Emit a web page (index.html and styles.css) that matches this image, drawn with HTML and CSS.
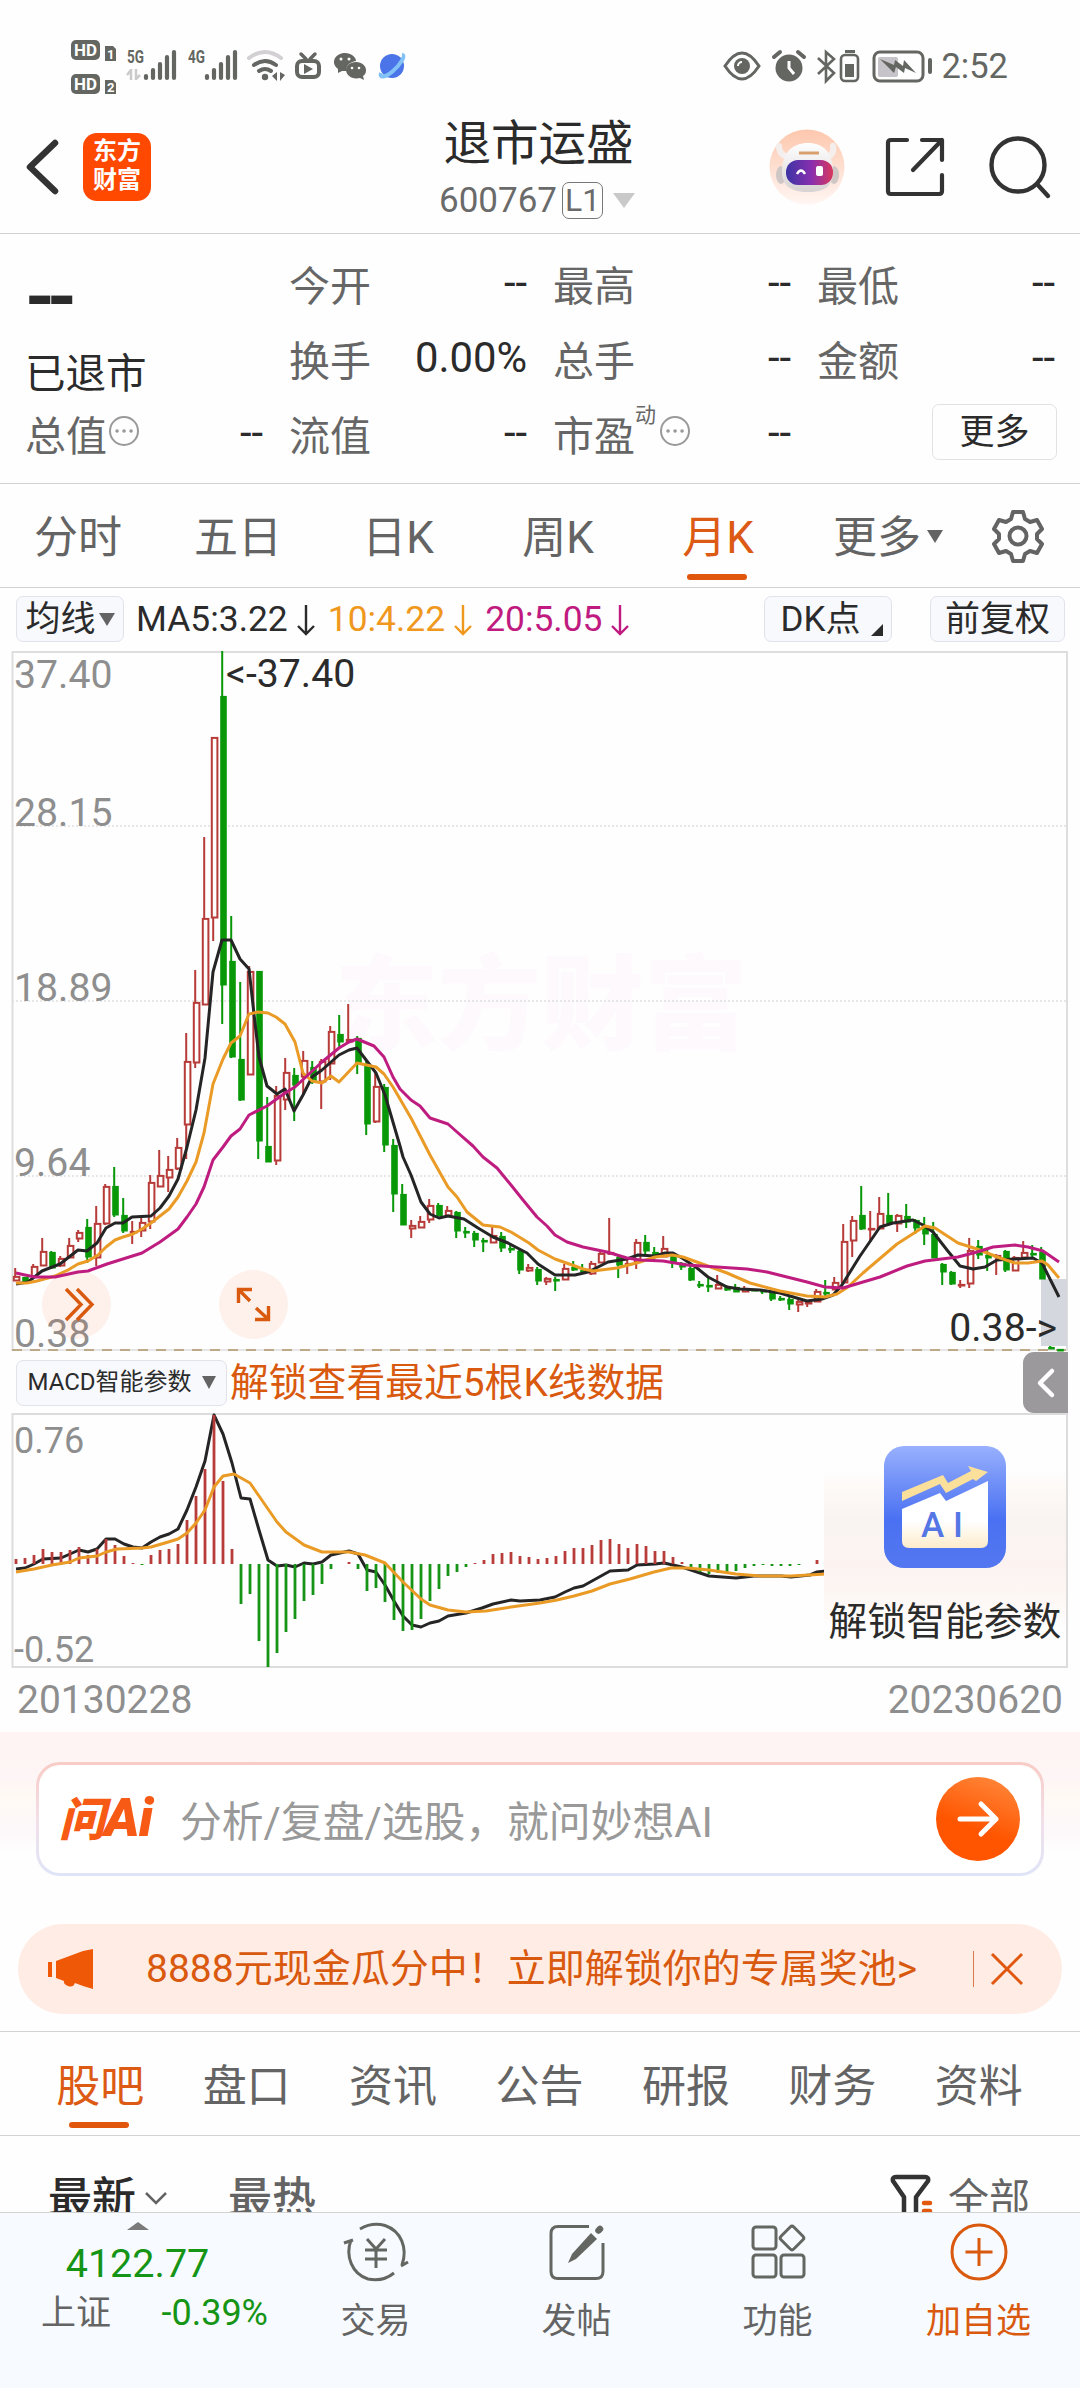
FILE: index.html
```html
<!DOCTYPE html>
<html lang="zh-CN">
  <head>
    <meta charset="UTF-8" />
    <meta name="viewport" content="width=device-width, initial-scale=1.0" />
    <title>退市运盛 600767</title>
    <link rel="stylesheet" href="styles.css">
  </head>

  <body>
    <div class="status">
      <svg class="status-left" viewBox="70 36 340 60" width="340" height="60" fill="#646662">
        <rect x="71" y="40" width="29" height="20" rx="5" />
        <rect x="71" y="74" width="29" height="20" rx="5" />
        <path d="M105 46h8l3 3v12h-11zM105 80h8l3 3v11h-11z" />
        <g fill="#fff" font-weight="700">
          <text x="74" y="56" font-size="17" textLength="23" lengthAdjust="spacingAndGlyphs">HD</text>
          <text x="74" y="90" font-size="17" textLength="23" lengthAdjust="spacingAndGlyphs">HD</text>
          <text x="107" y="59" font-size="13">1</text>
          <text x="107" y="92" font-size="13">2</text>
        </g>
        <g font-weight="700" font-size="19">
          <text x="127" y="63" textLength="17" lengthAdjust="spacingAndGlyphs">5G</text>
          <text x="188" y="63" textLength="17" lengthAdjust="spacingAndGlyphs">4G</text>
        </g>
        <path d="M131 69v11M136 69v11M131 70l-4 5M136 79l4-4" stroke="#cbcbcb" stroke-width="2.5" fill="none" />
        <path d="M146 76v2M153 70v8M160 64v14M167 57v21M174 52v26M207 76v2M214 70v8M221 64v14M228 57v21M235 52v26" stroke="#646662" stroke-width="4.2" stroke-linecap="round" />
        <path d="M249 58q16-12 32 0" fill="none" stroke="#d2d0d2" stroke-width="4" stroke-linecap="round" />
        <path d="M254 65q11-8 22 0M259 71q6-4 12 0" fill="none" stroke="#646662" stroke-width="4" stroke-linecap="round" />
        <circle cx="265" cy="77" r="3.2" />
        <path d="M277 72v9l-5-5zM280 72v9l5-6z" />
        <rect x="297" y="61" width="22" height="16" rx="5" fill="none" stroke="#646662" stroke-width="4" />
        <path d="M301 54l5 5M315 54l-5 5" stroke="#646662" stroke-width="3.5" stroke-linecap="round" />
        <path d="M304 64l9 5-9 5z" />
        <path d="M345 53c6 0 11 4 11 8-7 1-11 6-9 10l-5 0-4 2 0-4c-8-6-3-16 7-16z" />
        <path d="M356 62c6 0 10 4 10 8 0 3-1 5-3 6l1 4-4-2c-8 2-14-3-14-8 0-4 4-8 10-8z" />
        <g fill="#fff"><circle cx="341" cy="59" r="1.5" /><circle cx="349" cy="59" r="1.5" /><circle cx="352" cy="68" r="1.3" /><circle cx="359" cy="68" r="1.3" /></g>
        <circle cx="392" cy="66" r="12" fill="#4a74e8" />
        <path d="M381 73c-2 5 4 5 12-2s13-16 9-16" fill="none" stroke="#83c2f7" stroke-width="4" />
      </svg>
      <div class="status-right">
        <svg viewBox="725 48 212 34" width="212" height="34" fill="#646662">
          <path d="M727 65q17-26 34 0-17 26-34 0z" fill="none" stroke="#646662" stroke-width="3" />
          <circle cx="744" cy="65" r="8" />
          <path d="M740 65a4 4 0 0 1 4-4" stroke="#fff" stroke-width="2" fill="none" />
          <circle cx="791" cy="67" r="13.5" />
          <path d="M791 60v7l5 6" fill="none" stroke="#fff" stroke-width="3" />
          <path d="M776 56l6-5M806 56l-6-5" stroke="#646662" stroke-width="4" stroke-linecap="round" />
          <path d="M820 57l16 15-8 8V51l8 7-16 15" fill="none" stroke="#646662" stroke-width="2.6" />
          <rect x="843" y="54" width="17" height="26" rx="4" fill="none" stroke="#646662" stroke-width="2.6" />
          <path d="M847 49h10v3h-10zM847 63h9v13h-9z" />
          <rect x="876" y="51" width="49" height="29" rx="6" fill="none" stroke="#646662" stroke-width="3" />
          <rect x="880" y="56" width="20" height="20" rx="2" fill="#c6c4c8" />
          <path d="M882 58l14 6 1-5 8 6 1-6 12 13-11-5-1 5-8-6-2 6z" />
          <rect x="930" y="57" width="4" height="16" rx="2" />
        </svg>
        <span class="time">2:52</span>
      </div>
    </div>

    <header>
      <div class="header-left">
        <svg viewBox="0 0 34 60" width="34" height="60"><path d="M29 6L4 30l25 24" fill="none" stroke="#333" stroke-width="6.5" stroke-linecap="round" stroke-linejoin="round" /></svg>
        <div class="logo">东方<br>财富</div>
      </div>
      <div class="title">
        <h1>退市运盛</h1>
        <p>600767<span class="level">L1</span><i class="caret"></i></p>
      </div>
      <div class="header-right">
        <svg viewBox="0 0 76 76" width="76" height="76">
          <defs>
            <linearGradient id="halo" x2="0" y2="1"><stop stop-color="#fdc7ad" /><stop offset="1" stop-color="#fff6f3" /></linearGradient>
            <linearGradient id="visor"><stop stop-color="#3c34a5" /><stop offset=".55" stop-color="#8a2fae" /><stop offset="1" stop-color="#d9365c" /></linearGradient>
            <linearGradient id="head" x2="0" y2="1"><stop stop-color="#fff" /><stop offset="1" stop-color="#d8d2d2" /></linearGradient>
          </defs>
          <circle cx="38" cy="38" r="37.5" fill="url(#halo)" />
          <path d="M10 17q0 9 9 11M64 17q2 8-6 11" stroke="#f4eeec" stroke-width="6" fill="none" stroke-linecap="round" />
          <ellipse cx="12" cy="46" rx="5" ry="9" fill="#cfc6c6" /><ellipse cx="65" cy="46" rx="5" ry="9" fill="#cfc6c6" />
          <path d="M13 43c0-20 11-29 26-29s25 9 25 29c0 13-7 20-25 20s-26-7-26-20z" fill="url(#head)" />
          <path d="M30 24h20" stroke="#d9a06e" stroke-width="3" />
          <rect x="17" y="31" width="47" height="25" rx="12" fill="url(#visor)" />
          <path d="M28 45q4-7 8 0" stroke="#fff" stroke-width="2.5" fill="none" /><rect x="47" y="37" width="7" height="10" rx="2" fill="#fff" />
        </svg>
        <svg viewBox="0 0 60 60" width="60" height="60" fill="none" stroke="#333" stroke-width="4.2" stroke-linecap="round" stroke-linejoin="round"><path d="M22 3H6q-3 0-3 3v48q0 3 3 3h48q3 0 3-3V38M37 3h20v20M57 3L28 33" /></svg>
        <svg viewBox="0 0 62 62" width="62" height="62" fill="none" stroke="#333" stroke-width="4.4" stroke-linecap="round"><circle cx="29" cy="29" r="26.5" /><path d="M48 48l11 12" /></svg>
      </div>
    </header>

    <section class="quote">
      <div class="price">
        <div class="big">--</div>
        <div class="state">已退市</div>
      </div>
      <div class="cell"><span>今开</span><b>--</b></div>
      <div class="cell"><span>最高</span><b>--</b></div>
      <div class="cell"><span>最低</span><b>--</b></div>
      <div class="cell"><span>换手</span><b>0.00%</b></div>
      <div class="cell"><span>总手</span><b>--</b></div>
      <div class="cell"><span>金额</span><b>--</b></div>
      <div class="cell"><span>总值<svg class="dots" viewBox="0 0 32 32"><circle cx="16" cy="16" r="14" /><path d="M9 16h.1M16 16h.1M23 16h.1" /></svg></span><b>--</b></div>
      <div class="cell"><span>流值</span><b>--</b></div>
      <div class="cell"><span>市盈<sup>动</sup><svg class="dots" viewBox="0 0 32 32"><circle cx="16" cy="16" r="14" /><path d="M9 16h.1M16 16h.1M23 16h.1" /></svg></span><b>--</b></div>
      <div class="cell end"><button class="more">更多</button></div>
    </section>

    <nav class="periods">
      <a>分时</a>
      <a>五日</a>
      <a>日K</a>
      <a>周K</a>
      <a class="active">月K</a>
      <a class="wide">更多<i class="caret"></i></a>
      <svg viewBox="0 0 54 54" width="54" height="54" fill="none" stroke="#646464" stroke-width="4" stroke-linejoin="round"><path d="M22 3h10l2 7 5 3 7-2 5 9-5 5v5l5 5-5 9-7-2-5 3-2 7H22l-2-7-5-3-7 2-5-9 5-5v-5l-5-5 5-9 7 2 5-3z" /><circle cx="27" cy="27" r="8.5" /></svg>
    </nav>

    <div class="toolbar">
      <button class="chip ma-chip">均线<i class="caret"></i></button>
      <span class="ma">MA5:3.22<svg viewBox="0 0 18 34"><path d="M9 2v29M1 23l8 8 8-8" /></svg></span>
      <span class="ma ma10">10:4.22<svg viewBox="0 0 18 34"><path d="M9 2v29M1 23l8 8 8-8" /></svg></span>
      <span class="ma ma20">20:5.05<svg viewBox="0 0 18 34"><path d="M9 2v29M1 23l8 8 8-8" /></svg></span>
      <button class="chip dk">DK点<svg viewBox="0 0 12 12" width="12" height="12"><path d="M12 0v12H0z" fill="#2b2b2b" /></svg></button>
      <button class="chip fq">前复权</button>
    </div>

    <svg class="kline" viewBox="12 651 1056 701" width="1056" height="701">
      <text class="watermark" x="335" y="1042">东方财富</text>
      <path d="M12.5 1351V652H1067V1351" fill="none" stroke="#dedede" stroke-width="2" />
      <path d="M12 826h1055M12 1001h1055M12 1176h1055" stroke="#e0e0e0" stroke-width="1.5" stroke-dasharray="2 2" />
      <path d="M12 1350h1055" stroke="#e6e6e6" stroke-width="2" />
      <path d="M12 1350h1055" stroke="#b09468" stroke-width="1.400" stroke-dasharray="10 8" />
      <rect x="1041" y="1279" width="26" height="67" fill="#d5d7df" />
      <g class="axis">
        <text x="14" y="688">37.40</text>
        <text x="14" y="826">28.15</text>
        <text x="14" y="1001">18.89</text>
        <text x="14" y="1176">9.64</text>
        <text x="14" y="1347">0.38</text>
      </g>
      <g class="round">
        <circle cx="76.5" cy="1304.5" r="34.5" /><circle cx="253.5" cy="1304.5" r="34.5" />
        <path d="M66 1289l15 15.500-15 15.500M77 1289l15 15.500-15 15.500" />
        <path d="M238.500 1303v-13.500h13.500M239 1290l11 11M268.500 1306v13.500h-13.500M268 1319l-12-11" />
      </g>
      <g id="candles"></g>
      <g class="lines">
        <polyline class="c5" points="16,1284 28,1282 42,1271 60,1264 78,1250 87,1251 97,1243 106,1228 115,1223 123,1223 132,1217 151,1216 160,1208 169,1196 178,1179 187,1147 196,1110 205,1058 213,972 222,940 231,940 240,959 249,969 255,1023 259,1057 267,1086 277,1094 285,1089 294,1111 303,1095 312,1077 322,1070 339,1055 349,1050 357,1048 376,1073 385,1095 400,1146 403,1157 411,1175 421,1202 430,1214 439,1218 448,1216 464,1219 478,1228 493,1237 508,1243 527,1253 538,1264 555,1275 575,1275 588,1272 608,1262 627,1259 638,1255 655,1256 665,1253 673,1253 682,1258 697,1268 708,1277 727,1287 740,1289 760,1290 780,1293 800,1299 807,1301 822,1299 833,1295 842,1285 860,1256 880,1227 893,1223 913,1220 923,1225 933,1232 947,1250 960,1266 973,1269 985,1267 997,1260 1015,1259 1033,1258 1042,1263 1059,1297" />
        <polyline class="c10" points="16,1283 27,1283 37,1281 55,1276 68,1270 78,1264 88,1261 98,1255 106,1247 115,1240 123,1237 133,1234 142,1229 151,1223 169,1209 178,1197 187,1181 196,1162 204,1133 213,1084 223,1059 231,1043 240,1036 249,1014 258,1012 268,1013 276,1017 285,1024 295,1042 303,1073 312,1081 322,1083 331,1076 339,1082 357,1063 376,1067 384,1074 393,1087 400,1099 411,1118 430,1155 448,1187 457,1197 467,1212 483,1225 500,1227 511,1232 529,1243 538,1250 555,1259 575,1266 583,1269 593,1271 617,1268 640,1262 655,1257 672,1255 683,1257 705,1265 727,1273 750,1283 780,1291 807,1296 825,1297 837,1294 848,1287 863,1273 897,1244 925,1226 935,1228 958,1243 977,1249 1000,1258 1015,1263 1028,1263 1042,1261 1048,1265 1059,1278" />
        <polyline class="c20" points="16,1273 25,1275 35,1277 55,1277 78,1272 88,1271 107,1264 142,1253 160,1242 178,1229 187,1217 196,1204 204,1187 213,1160 223,1147 231,1136 240,1129 249,1115 267,1106 285,1093 295,1087 322,1062 339,1048 349,1042 357,1039 374,1046 384,1057 393,1077 400,1089 411,1100 420,1106 430,1118 448,1124 457,1132 473,1146 483,1157 497,1168 511,1185 523,1200 537,1217 547,1226 555,1235 567,1242 583,1247 607,1252 627,1258 640,1260 663,1261 687,1265 717,1267 747,1269 767,1272 783,1276 807,1282 825,1287 843,1288 863,1282 880,1277 907,1266 925,1261 958,1257 977,1252 993,1247 1015,1245 1028,1247 1043,1251 1059,1262" />
      </g>
      <g class="mark">
        <text x="226" y="687">&lt;-37.40</text>
        <text x="1057" y="1341" text-anchor="end">0.38-&gt;</text>
      </g>
    </svg>

    <div class="macd-bar">
      <button class="chip macd-chip">MACD智能参数<i class="caret"></i></button>
      <span class="unlock">解锁查看最近5根K线数据</span>
      <button class="collapse"><svg viewBox="0 0 20 32" width="20" height="32"><path d="M16 4L4 16l12 12" fill="none" stroke="#fff" stroke-width="4.500" stroke-linecap="round" stroke-linejoin="round" /></svg></button>
    </div>

    <section class="macd">
      <svg viewBox="12 1413 1056 255" width="1056" height="255">
        <rect x="12.5" y="1414" width="1054.500" height="253" fill="none" stroke="#dcdcdc" stroke-width="2" />
        <g class="axis small">
          <text x="14" y="1453">0.76</text>
          <text x="14" y="1662">-0.52</text>
        </g>
        <g class="lines">
          <polyline class="c5" points="16,1569 25,1568 34,1564 43,1559 61,1558 70,1554 79,1550 88,1552 97,1549 106,1539 115,1539 124,1544 133,1547 142,1548 151,1542 160,1537 169,1534 178,1529 187,1510 196,1487 205,1461 214,1415 223,1434 232,1463 241,1498 250,1499 259,1530 268,1560 277,1566 286,1565 295,1567 304,1563 313,1564 322,1562 331,1555 349,1551 358,1554 367,1570 376,1572 385,1585 394,1601 403,1616 412,1625 421,1627 430,1623 439,1621 448,1616 466,1613 482,1608 493,1604 511,1600 520,1601 540,1600 555,1597 565,1592 574,1588 583,1586 610,1571 628,1570 637,1565 655,1564 664,1563 682,1567 709,1576 736,1578 754,1576 781,1576 791,1577 810,1575 817,1572 826,1571" />
        </g>
        <g id="bars"></g>
        <g class="lines">
          <polyline class="c10" points="16,1572 34,1569 52,1565 70,1562 79,1558 97,1556 106,1552 117,1549 142,1548 151,1547 165,1543 178,1539 187,1533 196,1523 205,1510 214,1487 223,1476 234,1474 250,1483 259,1496 268,1509 277,1522 286,1532 304,1545 322,1552 349,1552 365,1555 385,1563 403,1582 421,1599 430,1605 448,1610 466,1612 486,1611 511,1607 540,1603 557,1600 574,1596 592,1591 610,1584 630,1579 654,1572 671,1568 688,1568 709,1570 736,1574 760,1576 791,1576 826,1574" />
        </g>
      </svg>
      <div class="ai-card">
        <svg viewBox="0 0 122 122" width="122" height="122">
          <defs>
            <linearGradient id="blue" x2="0" y2="1"><stop stop-color="#98b0fd" /><stop offset=".6" stop-color="#4a71f2" /><stop offset="1" stop-color="#5477f0" /></linearGradient>
            <linearGradient id="panel" x2="0" y2="1"><stop offset=".6" stop-color="#fff" /><stop offset="1" stop-color="#fdeccb" /></linearGradient>
          </defs>
          <rect width="122" height="122" rx="20" fill="url(#blue)" />
          <path d="M18 63l38-16 6 8 42-20v60q0 7-7 7H25q-7 0-7-7z" fill="url(#panel)" />
          <path d="M18 46l41-17 5 8 23-12-3-5 20 6-12 9-3-2-27 14-6-9-38 17z" fill="#fae09a" />
          <text x="37" y="91" font-size="35" font-weight="500" fill="#5577e6" textLength="42">AI</text>
        </svg>
        <p>解锁智能参数</p>
      </div>
    </section>

    <div class="dates"><span>20130228</span><span>20230620</span></div>

    <section class="ask">
      <div class="ask-box">
        <span class="ask-logo">问<em>Ai</em></span>
        <span class="ask-text">分析/复盘/选股，就问妙想AI</span>
        <button class="go"><svg viewBox="0 0 42 36" width="42" height="36"><path d="M3 18h36M24 3l15 15-15 15" fill="none" stroke="#fff" stroke-width="5" stroke-linecap="round" stroke-linejoin="round" /></svg></button>
      </div>
    </section>

    <div class="notice">
      <svg viewBox="0 0 46 40" width="46" height="40" fill="#ee5806"><path d="M0 13h4v15H0zM8 12l27-10L45 0v40l-10-3-8-3q-2 5-7 3-5-2-4-5l-8-3z" /></svg>
      <p>8888元现金瓜分中！立即解锁你的专属奖池&gt;</p>
      <i class="bar"></i>
      <svg viewBox="0 0 34 34" width="34" height="34"><path d="M2 2l30 30M32 2L2 32" stroke="#e0570f" stroke-width="3" /></svg>
    </div>

    <nav class="sections">
      <a class="active">股吧</a>
      <a>盘口</a>
      <a>资讯</a>
      <a>公告</a>
      <a>研报</a>
      <a>财务</a>
      <a>资料</a>
    </nav>

    <div class="feed">
      <b class="newest">最新</b>
      <svg class="down" viewBox="0 0 22 13" width="22" height="13"><path d="M1 1l10 10L21 1" fill="none" stroke="#646464" stroke-width="2.500" /></svg>
      <b>最热</b>
      <svg class="funnel" viewBox="0 0 44 44" width="44" height="44" fill="none" stroke-width="4.500" stroke-linecap="round" stroke-linejoin="round"><path d="M14 38V23L3 7q-1-4 3-4h29q4 0 3 4L26 23v18" stroke="#333" /><path d="M34 29h6M34 37h6" stroke="#e3580f" /></svg>
      <span>全部</span>
    </div>

    <footer>
      <div class="index">
        <i class="up"></i>
        <strong>4122.77</strong>
        <p><span>上证</span><em>-0.39%</em></p>
      </div>
      <div class="item">
        <svg viewBox="0 0 66 60" width="66" height="60" fill="none" stroke="#646662" stroke-width="3"><path d="M17 7Q29 0 42 3.500C58 9 65 26 59 43M51 51Q40 60 25 57C9 52 2 34 8 18M1 21l9-3M58 44l7-4M24 17l9 10 9-10M33 27v19M22 28h22M22 37h22" /></svg>
        <p>交易</p>
      </div>
      <div class="item">
        <svg viewBox="0 0 60 60" width="60" height="60" fill="none" stroke="#646662" stroke-width="3"><path d="M42 4.500H11q-7 0-7 7v38q0 7 7 7h38q7 0 7-7V21" /><path d="M51.500 8.500l1.500-1.500" stroke-width="6.500" stroke-linecap="round" /><path d="M44 11l6 6-21 20-8 4 4-9z" fill="#646662" stroke="none" /></svg>
        <p>发帖</p>
      </div>
      <div class="item">
        <svg viewBox="0 0 60 60" width="60" height="60" fill="none" stroke="#646662" stroke-width="3"><rect x="5" y="5" width="23" height="22" rx="3" /><rect x="5" y="33" width="23" height="22" rx="3" /><rect x="33" y="33" width="23" height="22" rx="3" /><rect x="35" y="7" width="18" height="18" rx="2.500" transform="rotate(45 44 16)" /></svg>
        <p>功能</p>
      </div>
      <div class="item add">
        <svg viewBox="0 0 60 60" width="60" height="60" fill="none" stroke="#d9590f" stroke-width="3"><circle cx="30" cy="30" r="27" /><path d="M30 16v28M16.500 30h27" /></svg>
        <p>加自选</p>
      </div>
    </footer>

    <script src="chart.js"></script>
  </body>
</html>
```

FILE: styles.css
```css
* {
  box-sizing: border-box;
  margin: 0;
  padding: 0;
}

body {
  width: 1080px;
  height: 2388px;
  overflow: hidden;
  background-color: #fefefe;
  color: #2b2b2b;
  font-family: Roboto, "Noto Sans CJK SC", sans-serif;
}

svg {
  display: block;
  flex-shrink: 0;
  overflow: visible;
}

button {
  font-family: inherit;
  color: inherit;
  border: none;
  background: none;
}

.caret {
  display: inline-block;
  border: solid transparent;
  border-width: 13px 8px 0;
  border-top-color: #646464;
}

/* status bar */
.status {
  height: 103px;
  padding: 36px 72px 0 70px;
  display: flex;
  justify-content: space-between;
}
.status-right {
  display: flex;
  height: 60px;
  align-items: center;
  gap: 6px;
}
.time {
  font-size: 34.5px;
  color: #646662;
}

/* header */
header {
  height: 131px;
  border-bottom: 1px solid #d2d2d2;
  padding: 0 29px 0 26px;
  display: grid;
  grid-template-columns: 1fr auto 1fr;
}
.header-left {
  display: flex;
  align-items: center;
  gap: 23px;
  height: 127px;
}
.logo {
  width: 68px;
  height: 68px;
  border-radius: 14px;
  background-color: #ff4800;
  color: #fff;
  font-size: 24px;
  font-weight: 700;
  line-height: 29px;
  padding-top: 4px;
  text-align: center;
}
.title {
  text-align: center;
}
.title h1 {
  font-size: 47.5px;
  font-weight: 400;
  line-height: 60px;
  padding-top: 11px;
  height: 77px;
}
.title p {
  display: flex;
  align-items: center;
  justify-content: center;
  height: 40px;
  font-size: 35px;
  color: #6a6a6a;
  margin-left: -3px;
}
.level {
  border: 1.5px solid #777;
  border-radius: 7px;
  height: 37px;
  width: 41px;
  line-height: 35px;
  font-size: 32px;
  margin: 0 10px 0 5px;
}
.title .caret {
  border-width: 15px 11px 0;
  border-top-color: #c9c9c9;
}
.header-right {
  display: flex;
  align-items: center;
  justify-content: flex-end;
  height: 127px;
  gap: 40px;
}
.header-right svg:last-child {
  margin-left: 4px;
}

/* quote */
.quote {
  height: 250px;
  border-bottom: 1px solid #d2d2d2;
  padding: 11px 25px 0;
  display: grid;
  grid-template-columns: repeat(4, 238px);
  grid-template-rows: repeat(3, 75px);
  column-gap: 26px;
}
.price {
  grid-row: span 2;
}
.big {
  font-size: 76px;
  font-weight: 700;
  letter-spacing: -8px;
  height: 94px;
  line-height: 104px;
}
.state {
  font-size: 40.5px;
  line-height: 60px;
  padding-top: 5px;
}
.cell {
  display: flex;
  align-items: center;
  justify-content: space-between;
  font-size: 41px;
  color: #666;
}
.cell span {
  display: flex;
  align-items: center;
}
.cell b {
  font-weight: 400;
  font-size: 41.8px;
  color: #2b2b2b;
}
.cell sup {
  font-size: 21px;
  line-height: 20px;
  align-self: flex-start;
  margin-right: 2px;
  margin-top: 2px;
}
.dots {
  width: 32px;
  height: 32px;
  fill: none;
  stroke: #999;
  stroke-width: 2;
  margin: -3px 0 0 1px;
}
.dots path {
  stroke-width: 3.5;
  stroke-linecap: round;
}
.cell.end {
  justify-content: flex-end;
  margin-right: -2px;
}
.more {
  width: 125px;
  height: 56px;
  border: 1.5px solid #e2e2e2;
  border-radius: 7px;
  font-size: 35px;
  line-height: 53px;
  color: #2b2b2b;
  margin-top: -1px;
}

/* period tabs */
.periods {
  height: 104px;
  border-bottom: 1px solid #d2d2d2;
  display: flex;
  align-items: center;
}
.periods a,
.sections a {
  width: 160px;
  height: 100%;
  line-height: 108px;
  font-size: 44px;
  color: #646464;
  text-align: center;
  position: relative;
}
.periods a {
  left: -2px;
}
.periods a.wide {
  width: 180px;
  margin-right: 11px;
}
.wide .caret {
  margin: 0 0 10px 6px;
}
.periods a.active,
.sections a.active {
  color: #dc5a14;
}
.active::after {
  content: "";
  position: absolute;
  left: 50%;
  bottom: 7px;
  width: 60px;
  height: 6px;
  margin-left: -31px;
  border-radius: 3px;
  background-color: #e0560c;
}

/* toolbar */
.toolbar {
  height: 63px;
  padding: 0 15px 1px 16px;
  display: flex;
  align-items: center;
  font-size: 35.4px;
}
.chip {
  height: 46px;
  border: 1.5px solid #e1e3eb;
  border-radius: 7px;
  background-color: #f7f9fd;
  font-size: 35px;
  display: flex;
  align-items: center;
  justify-content: center;
  line-height: 43px;
  white-space: nowrap;
}
.ma-chip {
  width: 108px;
  gap: 3px;
  margin-right: 12px;
}
.ma {
  display: flex;
  align-items: center;
  margin-right: 13px;
}
.ma svg {
  width: 18px;
  height: 34px;
  margin: 2px 0 0 9px;
  fill: none;
  stroke: currentColor;
  stroke-width: 2.4;
}
.ma10 {
  color: #f0981e;
}
.ma20 {
  color: #c01a80;
}
.dk {
  width: 128px;
  margin-left: auto;
  margin-right: 38px;
  padding-left: 8px;
  gap: 11px;
}
.dk svg {
  margin-top: 22px;
}
.fq {
  width: 135px;
}

/* charts */
.kline,
.macd {
  margin-left: 12px;
}
.watermark {
  font-size: 103px;
  font-weight: 900;
  fill: #fdf9fd;
}
.axis {
  font-size: 39.2px;
  fill: #8e8e8e;
}
.axis.small {
  font-size: 36px;
}
.mark {
  font-size: 39.2px;
  fill: #2b2b2b;
}
.round circle {
  fill: #fc6830;
  fill-opacity: 0.09;
}
.round path {
  fill: none;
  stroke: #d9590f;
  stroke-width: 3.4;
}
.lines {
  fill: none;
  stroke-width: 3;
  stroke-linejoin: round;
}
.c5 {
  stroke: #252525;
}
.c10 {
  stroke: #ea9b26;
}
.c20 {
  stroke: #bf1c80;
}
.rise {
  fill: #fefefe;
  stroke: #b73b38;
  stroke-width: 2;
}
.fall {
  fill: #089808;
  stroke: #089808;
  stroke-width: 2;
}

.macd-bar {
  height: 61px;
  padding-left: 16px;
  display: flex;
  align-items: center;
}
.macd-chip {
  width: 211px;
  font-size: 24px;
  gap: 10px;
}
.macd-chip .caret {
  border-width: 13px 7.5px 0;
}
.unlock {
  font-size: 38.8px;
  line-height: 58px;
  color: #d9590f;
  margin-left: 3px;
}
.collapse {
  width: 45px;
  height: 61px;
  margin: 0 12px 0 auto;
  border-radius: 11px 0 0 11px;
  background-color: #9b999b;
  display: flex;
  align-items: center;
  justify-content: center;
}
.macd {
  position: relative;
  width: 1056px;
}
.ai-card {
  position: absolute;
  top: 2px;
  right: 2px;
  width: 242px;
  height: 251px;
  padding-top: 31px;
  display: flex;
  flex-direction: column;
  align-items: center;
  background: linear-gradient(#fefefe 22%, #fdf9f6 30%, #f9f4f1 42%, #fcf3f1 60%, #fdf6f3 70%, #fefefe 86%);
}
.ai-card p {
  font-size: 38.8px;
  line-height: 50px;
  margin-top: 29px;
  white-space: nowrap;
}
.dates {
  height: 64px;
  padding: 9px 17px 0;
  display: flex;
  justify-content: space-between;
  font-size: 39px;
  line-height: 47px;
  color: #8e8e8e;
}

/* ask */
.ask {
  height: 192px;
  padding: 30px 36px 0;
  background: linear-gradient(#fff4f3 0, #fef5f6 45px, #fffaf4 65px, #fdf8fa 100px, #fefefe 120px);
}
.ask-box {
  height: 114px;
  border: 3px solid transparent;
  border-radius: 24px;
  background: linear-gradient(#fff, #fff) padding-box, linear-gradient(#f8cbc5, #f2dfe8 50%, #dfe4f8) border-box;
  display: flex;
  align-items: center;
  padding: 0 21px 0 20px;
}
.ask-logo {
  width: 121px;
  font-size: 46px;
  font-weight: 900;
  letter-spacing: -1px;
  font-style: italic;
  color: #f75a14;
  white-space: nowrap;
  line-height: 60px;
}
.ask-logo em {
  font-size: 54px;
}
.ask-text {
  font-size: 41.8px;
  color: #999;
  flex: 1;
}
.go {
  width: 84px;
  height: 84px;
  border-radius: 50%;
  background: linear-gradient(200deg, #ff8c40, #ff5500 60%);
  display: flex;
  align-items: center;
  justify-content: center;
}

.notice {
  margin: 0 18px 17px;
  height: 90px;
  border-radius: 45px;
  background-color: #ffede5;
  padding: 0 38px 0 30px;
  display: flex;
  align-items: center;
  color: #d9590f;
}
.notice p {
  font-size: 39px;
  line-height: 60px;
  margin-left: 52px;
  white-space: nowrap;
}
.notice .bar {
  width: 1.5px;
  height: 36px;
  background-color: #d9794a;
  margin: 0 16px 0 auto;
}

/* section tabs */
.sections {
  height: 105px;
  border-top: 1px solid #d2d2d2;
  border-bottom: 1px solid #d2d2d2;
  padding: 0 28px 0 27px;
  display: flex;
}
.sections a {
  flex: 1;
  line-height: 110px;
}

.feed {
  height: 76px;
  overflow: hidden;
  padding: 31px 50px 0 48px;
  display: flex;
  align-items: flex-start;
  font-size: 44px;
  line-height: 64px;
  color: #646464;
}
.feed b {
  font-weight: 500;
}
.feed .newest {
  color: #2b2b2b;
}
.down {
  margin: 25px 61px 0 9px;
}
.funnel {
  margin: 7px 14px 0 auto;
}
.feed span {
  font-size: 41px;
}

/* bottom bar */
footer {
  height: 176px;
  border-top: 1px solid #d2d2d2;
  background-color: #f7fafe;
  display: flex;
}
.index {
  width: 275px;
  text-align: center;
  color: #159415;
}
.up {
  display: block;
  width: 0;
  margin: 9px 0 0 127px;
  border: solid transparent;
  border-width: 0 11px 8px;
  border-bottom-color: #7a7a7a;
}
.index strong {
  display: block;
  font-weight: 400;
  font-size: 39.5px;
  line-height: 46px;
  margin-top: 11px;
}
.index p {
  display: flex;
  justify-content: space-between;
  padding: 0 7px 0 41px;
  font-size: 36px;
  line-height: 52px;
}
.index span {
  font-size: 35px;
  color: #646464;
  padding-top: 1px;
}
.index em {
  font-style: normal;
}
.item {
  width: 201px;
  padding-top: 9px;
  display: flex;
  flex-direction: column;
  align-items: center;
  font-size: 35px;
  line-height: 50px;
  color: #646464;
}
.item p {
  margin-top: 15px;
}
.add {
  color: #d9590f;
}
```

FILE: chart.js
```js
const svgNs = "http://www.w3.org/2000/svg";
const step = 9;
const startX = 16;

// r = rise, f = fall: high, body top, body bottom, low
const candles = `
r 1268 1276 1281 1281,f 1277 1277 1281 1281,r 1264 1266 1277 1277,r 1238 1251 1266 1266,f 1251 1252 1268 1269,
r 1256 1258 1266 1267,r 1238 1245 1258 1258,r 1230 1232 1239 1242,f 1219 1227 1257 1263,r 1206 1223 1258 1266,
r 1184 1186 1224 1225,f 1167 1186 1215 1217,f 1198 1215 1231 1233,r 1221 1231 1232 1244,r 1218 1222 1231 1237,
r 1175 1182 1222 1229,r 1150 1175 1187 1187,r 1156 1169 1178 1192,r 1138 1147 1169 1170,r 1033 1061 1125 1159,
r 970 1002 1063 1068,r 837 918 1005 1005,r 737 737 918 941,f 651 696 985 1024,f 916 961 1057 1058,
f 982 1059 1100 1101,r 966 971 1075 1075,f 971 971 1141 1159,f 1097 1146 1162 1162,r 1086 1095 1161 1165,
r 1058 1072 1100 1110,f 1068 1075 1085 1121,r 1051 1060 1077 1095,f 1061 1067 1082 1084,r 1059 1061 1082 1109,
r 1026 1031 1064 1080,f 1015 1034 1042 1047,r 1004 1039 1042 1042,f 1036 1038 1063 1074,f 1060 1064 1124 1135,
r 1073 1086 1122 1123,f 1084 1087 1145 1152,f 1139 1145 1194 1212,f 1184 1194 1225 1225,r 1220 1225 1229 1238,
r 1216 1221 1228 1228,r 1199 1205 1220 1223,f 1203 1205 1216 1216,r 1206 1210 1216 1216,f 1211 1212 1231 1238,
f 1227 1231 1233 1238,f 1231 1233 1240 1247,f 1238 1240 1242 1252,r 1227 1235 1243 1243,f 1232 1236 1248 1252,
f 1243 1248 1250 1253,f 1249 1251 1270 1274,r 1264 1267 1271 1272,f 1267 1269 1281 1285,r 1277 1278 1282 1285,
f 1277 1279 1280 1291,r 1264 1268 1280 1280,f 1261 1267 1270 1271,f 1264 1270 1272 1272,r 1261 1263 1274 1275,
r 1250 1253 1263 1263,r 1218 1252 1253 1255,f 1255 1257 1265 1278,r 1257 1263 1265 1274,r 1239 1242 1262 1269,
f 1235 1242 1251 1255,f 1247 1252 1255 1262,r 1236 1248 1257 1257,f 1253 1255 1263 1268,f 1262 1263 1267 1270,
f 1265 1268 1280 1281,f 1281 1284 1285 1288,f 1278 1285 1287 1292,r 1275 1284 1289 1289,f 1285 1287 1290 1291,
f 1284 1287 1292 1292,r 1286 1288 1292 1292,f 1289 1289 1290 1290,f 1290 1290 1292 1294,f 1292 1292 1299 1301,
f 1296 1298 1299 1301,f 1297 1299 1304 1310,r 1300 1301 1305 1312,r 1300 1302 1303 1307,r 1289 1291 1302 1302,
f 1280 1292 1293 1297,r 1277 1282 1290 1290,r 1224 1241 1283 1283,r 1216 1220 1241 1257,f 1186 1215 1229 1230,
r 1211 1228 1230 1242,r 1197 1213 1229 1229,f 1193 1215 1223 1226,r 1214 1215 1224 1232,f 1204 1216 1222 1228,
f 1219 1220 1228 1234,f 1217 1227 1234 1245,f 1222 1234 1258 1258,f 1263 1264 1272 1285,f 1271 1272 1284 1285,
r 1280 1284 1285 1288,r 1238 1250 1284 1288,f 1240 1246 1255 1259,f 1249 1255 1258 1271,r 1254 1255 1257 1275,
f 1250 1251 1270 1272,r 1256 1257 1271 1271,r 1241 1252 1258 1258,f 1245 1253 1254 1258,f 1247 1252 1279 1279,
f 1346 1347 1349 1349,f 1349 1349 1350 1350`;

const macd = [
  5, 6, 9, 15, 12, 12, 14, 17, 9, 15, 25, 19, 8, 1, -1, 9, 14, 15, 20, 44, 68, 95, 149, 83, 15,
  -40, -30, -77, -103, -89, -68, -55, -37, -31, -20, -5, 0, 2, -5, -27, -24, -38, -56, -67, -66,
  -55, -37, -25, -12, -8, -3, 1, 4, 10, 11, 12, 8, 7, 5, 6, 8, 13, 16, 16, 19, 24, 25, 20, 16, 20,
  18, 13, 13, 7, 2, -4, -8, -10, -9, -8, -7, -4, -2, -1, -2, -2, -2, -1, 0, 4,
];

function draw(parent, name, attrs) {
  const el = document.createElementNS(svgNs, name);
  for (const key in attrs) el.setAttribute(key, attrs[key]);
  parent.appendChild(el);
}

const candleGroup = document.querySelector("#candles");
candles.trim().split(",").forEach((row, i) => {
  const [type, ...nums] = row.trim().split(" ");
  const [high, top, bottom, low] = nums.map(Number);
  const x = startX + i * step;
  const cls = type == "r" ? "rise" : "fall";
  draw(candleGroup, "path", { class: cls, d: `M${x - 0.8} ${high}V${top}M${x - 0.8} ${bottom}V${low}` });
  draw(candleGroup, "rect", {
    class: cls,
    x: x - (cls == "rise" ? 2.2 : 1.8),
    y: top + 0.9,
    width: cls == "rise" ? 5.6 : 4.6,
    height: Math.max(bottom - top - 1.4, 0.6),
  });
});

const barGroup = document.querySelector("#bars");
const zero = 1564;
macd.forEach((v, i) => {
  if (v == 0) return;
  draw(barGroup, "rect", {
    x: startX + i * step - 1.4,
    y: v > 0 ? zero - v : zero,
    width: 2.8,
    height: Math.abs(v),
    fill: v > 0 ? "#b83c3a" : "#159415",
  });
});
```
